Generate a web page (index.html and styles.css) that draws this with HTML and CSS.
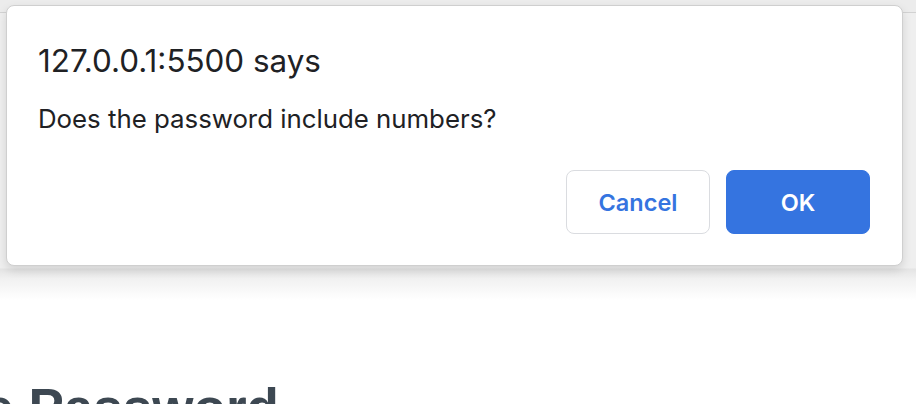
FILE: index.html
```html
<!DOCTYPE html>
<html>
<head>
<meta charset="utf-8">
<link rel="stylesheet" href="styles.css">
</head>
<body>
  <div class="chrome">
    <div class="topbar"></div>
    <div class="veil"></div>
  </div>
  <main class="page">
    <h1 class="title">Generate Password</h1>
  </main>
  <div class="dialog" role="alertdialog">
    <div class="dialog-title">127.0.0.1:5500 says</div>
    <div class="dialog-msg">Does the password include numbers?</div>
    <div class="dialog-actions">
      <button class="btn btn-cancel">Cancel</button>
      <button class="btn btn-ok">OK</button>
    </div>
  </div>
</body>
</html>
```

FILE: styles.css
```css
html, body {
  margin: 0;
  padding: 0;
  background: #ffffff;
  overflow: hidden;
}
body {
  width: 916px;
  height: 404px;
  position: relative;
  font-family: "Inter", "Roboto", "Liberation Sans", sans-serif;
}
.chrome {
  height: 300px;
  display: flex;
  flex-direction: column;
}
.topbar {
  height: 12px;
  background: #ececec;
  border-bottom: 1px solid #d2d2d2;
}
.veil {
  flex: 1;
  background: linear-gradient(to bottom, #efefef 0, #efefef 255px, #e4e4e4 256px, #f1f1f1 266px, #ffffff 100%);
}
.page {
  padding-top: 81px;
  height: 23px;
  overflow: hidden;
}
.title {
  margin: 0 0 0 -216px;
  font-family: "Liberation Sans", Arial, sans-serif;
  font-weight: 700;
  font-size: 53px;
  line-height: 53px;
  color: #3d4852;
  white-space: nowrap;
}
.dialog {
  position: absolute;
  left: 6px;
  top: 5px;
  width: 897px;
  height: 261px;
  box-sizing: border-box;
  background: #ffffff;
  border: 1px solid #cfcfcf;
  border-radius: 8px;
  box-shadow: 0 4px 10px rgba(0, 0, 0, 0.12);
  padding: 37px 32px 0 31px;
  color: #202124;
}
.dialog-title {
  font-size: 31.4px;
  line-height: 36px;
}
.dialog-msg {
  margin-top: 24px;
  font-size: 25.8px;
  line-height: 32px;
}
.dialog-actions {
  margin-top: 35px;
  display: flex;
  justify-content: flex-end;
  gap: 16px;
}
.btn {
  width: 144px;
  height: 64px;
  border-radius: 8px;
  font-family: "Inter", "Roboto", "Liberation Sans", sans-serif;
  font-size: 23.5px;
  font-weight: 600;
  cursor: pointer;
}
.btn-cancel {
  background: #ffffff;
  border: 1px solid #dadce0;
  color: #3574e0;
}
.btn-ok {
  background: #3574e0;
  border: 1px solid #3574e0;
  color: #ffffff;
}
```
